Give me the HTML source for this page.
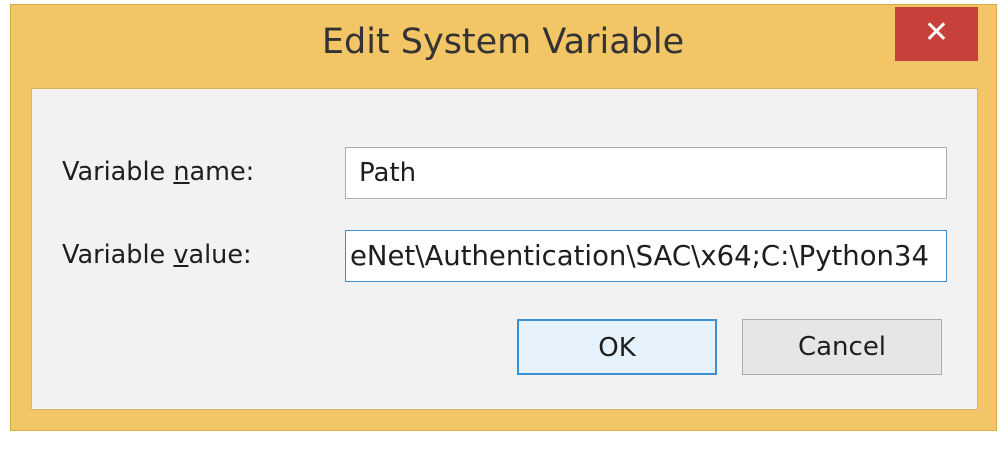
<!DOCTYPE html>
<html><head><style>
body{margin:0;width:1006px;height:449px;background:#fff;position:relative;overflow:hidden;font-family:"DejaVu Sans","Liberation Sans",sans-serif;color:#1e1e1e}
.frame{position:absolute;left:10px;top:4px;width:987px;height:427px;background:#f2c666;border:1px solid #d8a946;box-sizing:border-box}
.title{position:absolute;left:0;width:1006px;top:22px;text-align:center;font-size:35px;color:#333}
.close{position:absolute;left:895px;top:7px;width:83px;height:54px;background:#c7403a;color:#fff;text-align:center;font-size:30px;line-height:52px}
.panel{position:absolute;left:31px;top:88px;width:947px;height:322px;background:#f2f2f2;border:1px solid #d9b462;box-sizing:border-box}
.lbl{position:absolute;left:62px;font-size:25.5px}
.box{position:absolute;left:345px;width:602px;height:52px;background:#fff;border:1px solid #abadb3;box-sizing:border-box;font-size:26px;line-height:50px;padding-left:13px;white-space:nowrap;overflow:hidden}
.btn{position:absolute;top:319px;width:200px;height:56px;background:#e6e6e6;border:1px solid #adadad;box-sizing:border-box;text-align:center;font-size:26px;line-height:54px}
</style></head><body>
<div class="frame"></div>
<div class="title">Edit System Variable</div>
<div class="close">✕</div>
<div class="panel"></div>
<div class="lbl" style="top:157px">Variable <u>n</u>ame:</div>
<div class="lbl" style="top:240px">Variable <u>v</u>alue:</div>
<div class="box" style="top:147px">Path</div>
<div class="box" style="top:230px;border-color:#3c8fd0;padding-left:4px;font-size:27.5px">eNet\Authentication\SAC\x64;C:\Python34</div>
<div class="btn" style="left:517px;border:2px solid #3c8fd0;background:#e5f1fb">OK</div>
<div class="btn" style="left:742px">Cancel</div>
</body></html>
